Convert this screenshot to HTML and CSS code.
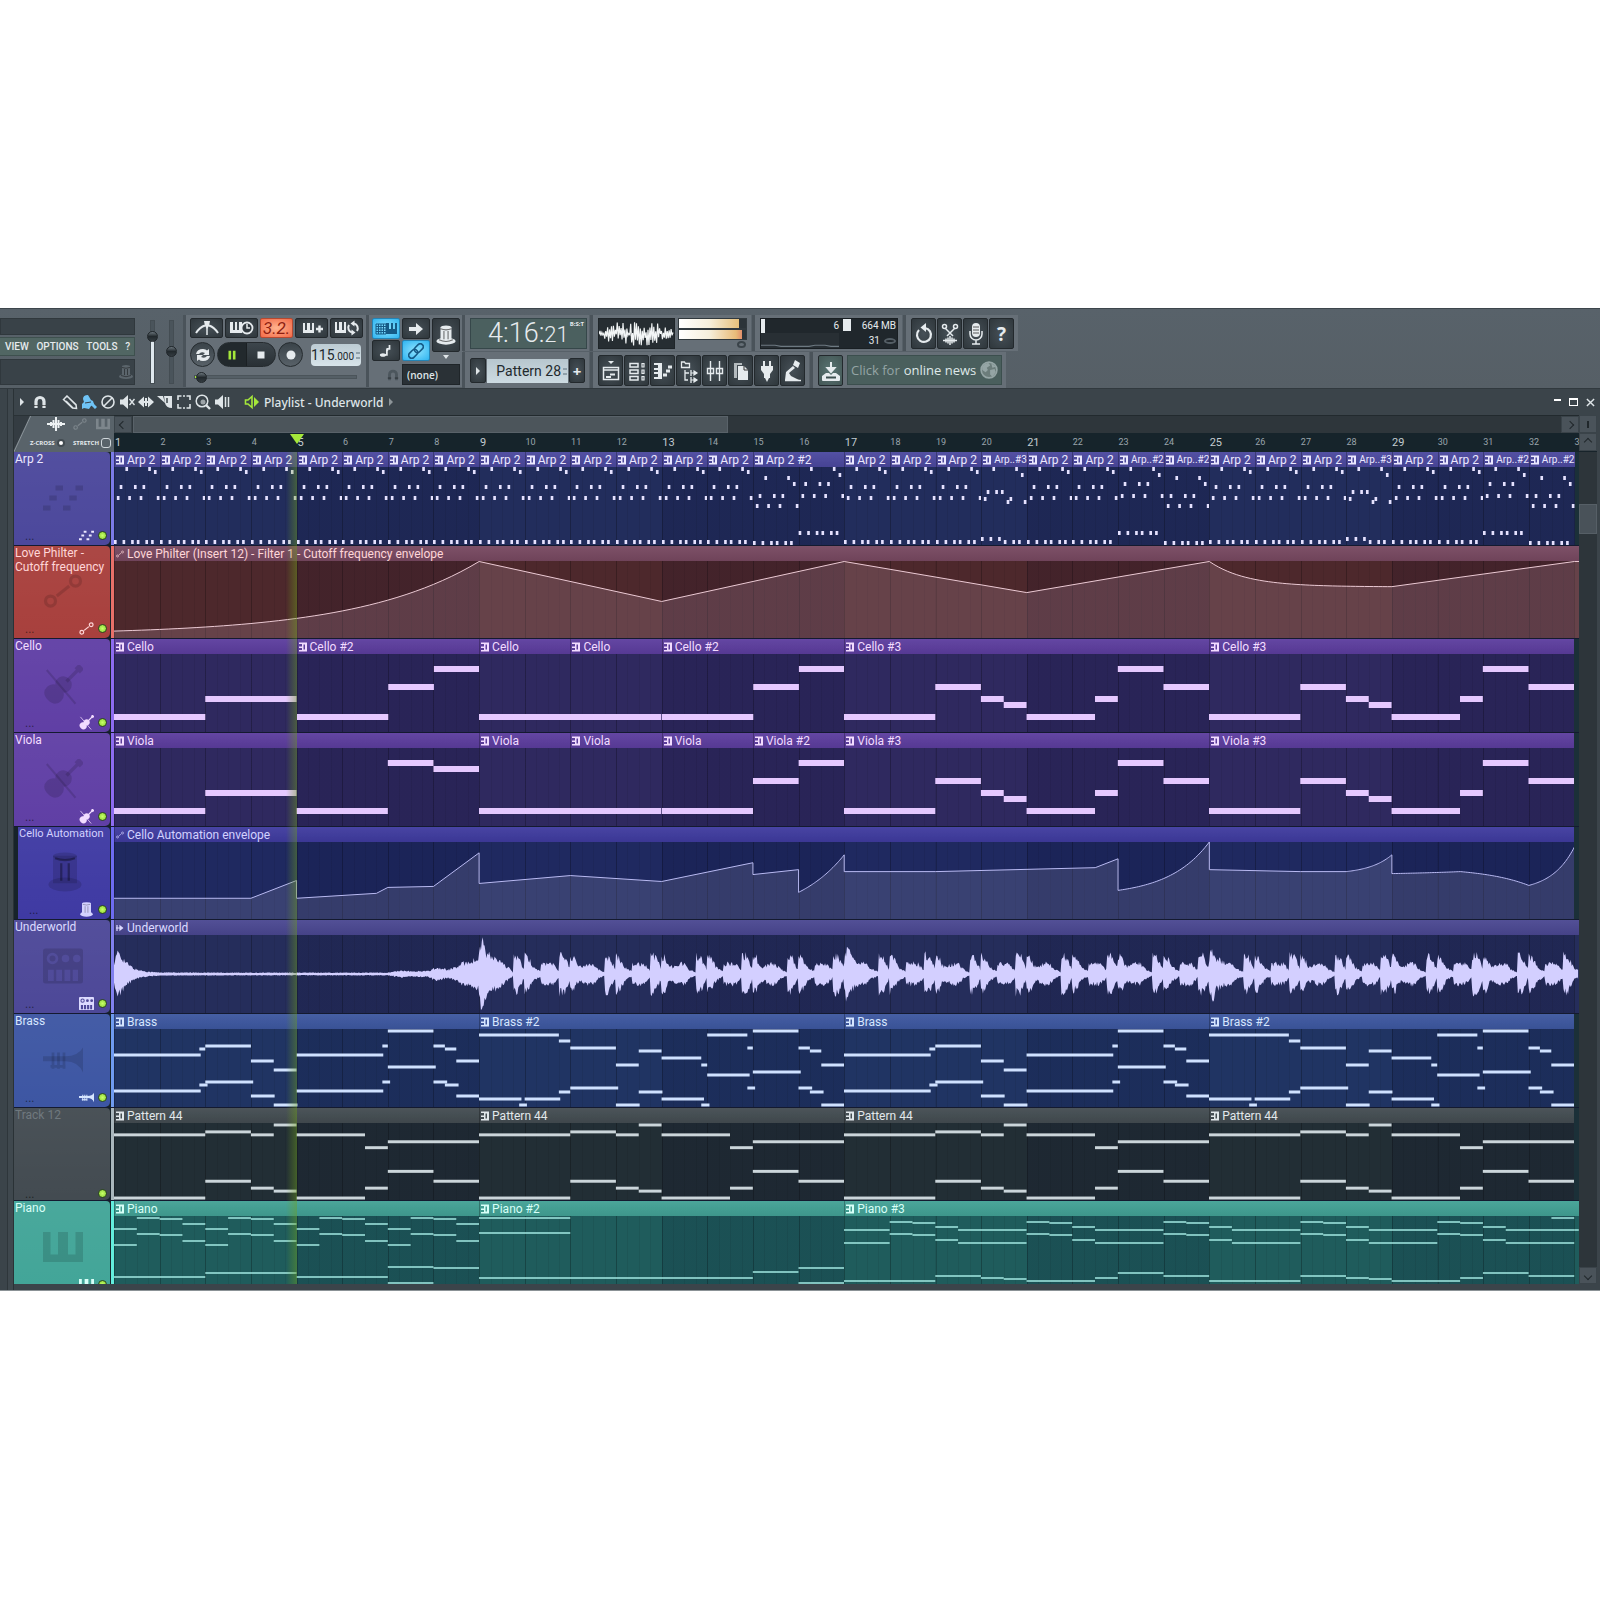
FILE: index.html
```
<!DOCTYPE html>
<html lang="en">
  <head>
    <meta charset="UTF-8" />
    <meta name="viewport" content="width=device-width, initial-scale=1.0" />
    <title>Playlist - Underworld</title>
    <link rel="stylesheet" href="styles.css">
  </head>
  <body>
    <!-- Icon sprite -->
    <svg class="sprite" aria-hidden="true">
      <symbol id="i-metro" viewBox="0 0 26 16"><path d="M2 13Q6 7 11 5.500M24 13Q20 7 15 5.500" fill="none" stroke="currentColor" stroke-width="2"/><path d="M13 15V4" stroke="currentColor" stroke-width="1.500"/><path d="M10 1h6l-1 5-2 3-2-3z" fill="currentColor"/></symbol>
      <symbol id="i-keyclock" viewBox="0 0 26 16"><path d="M1 2h3v8h2V2h2v8h2V2h3v11H1z" fill="currentColor"/><circle cx="18" cy="8" r="5.500" fill="#31393f" stroke="currentColor" stroke-width="1.800"/><path d="M18 4v4h3" fill="none" stroke="currentColor" stroke-width="1.500"/></symbol>
      <symbol id="i-keyplus" viewBox="0 0 26 16"><path d="M4 3h2v7h2V3h3v7h2V3h2v10H4z" fill="currentColor"/><path d="M17 9h7M20.500 5.500v7" stroke="currentColor" stroke-width="2.400"/></symbol>
      <symbol id="i-keyloop" viewBox="0 0 26 16"><path d="M1 2h2v8h2V2h3v8h2V2h2v11H1z" fill="currentColor"/><path d="M18 12.500a5 5 0 0 1-3-7.500M20 3.500a5 5 0 0 1 3 7.500" fill="none" stroke="currentColor" stroke-width="2"/><path d="M20.500 .5v6l-4-3zM17.500 9.500v6l4-3z" fill="currentColor"/></symbol>
      <symbol id="i-loop" viewBox="0 0 16 16"><path d="M1 7q1-5 7-5 3 0 4 1.500L14 2v6H8l2-2q-4-2-6 1zM15 9q-1 5-7 5-3 0-4-1.500L2 14V8h6l-2 2q4 2 6-1z" fill="currentColor"/></symbol>
      <symbol id="i-pause" viewBox="0 0 16 16"><path d="M4 3h3v10H4zM9 3h3v10H9z" fill="currentColor"/></symbol>
      <symbol id="i-stop" viewBox="0 0 16 16"><path d="M4.500 4.500h7v7h-7z" fill="currentColor"/></symbol>
      <symbol id="i-rec" viewBox="0 0 16 16"><circle cx="8" cy="8" r="4.500" fill="currentColor"/></symbol>
      <symbol id="i-typing" viewBox="0 0 24 16"><path d="M2 3h10v10H2zM4.500 3v10M7 3v10M9.500 3v10M2 5.500h10M2 8h10M2 10.500h10" fill="none" stroke="currentColor"/><path d="M12 2h3v6h2V2h2v6h2V2h2v11H12z" fill="currentColor"/></symbol>
      <symbol id="i-arrow" viewBox="0 0 16 16"><path d="M1 6h7V2l7 6-7 6v-4H1z" fill="currentColor"/></symbol>
      <symbol id="i-note" viewBox="0 0 16 16"><ellipse cx="4.500" cy="12.500" rx="3.500" ry="2" fill="currentColor"/><path d="M6 12.500h3V6M9.500 8V5.500h2.500V1" fill="none" stroke="currentColor" stroke-width="2"/></symbol>
      <symbol id="i-link" viewBox="0 0 16 16"><g fill="none" stroke="currentColor" stroke-width="1.600" transform="rotate(-45 8 8)"><rect x="-1" y="5" width="10" height="6" rx="3"/><rect x="7" y="5" width="10" height="6" rx="3"/></g></symbol>
      <symbol id="i-hat" viewBox="0 0 16 16"><path d="M4 2.500v8.500h8V2.500z" fill="currentColor"/><ellipse cx="8" cy="2.500" rx="4" ry="1.500" fill="currentColor"/><ellipse cx="8" cy="12.500" rx="7" ry="2.500" fill="currentColor"/><path d="M6.500 5v6M9.500 5v6M4 3.500q4 1.500 8 0" fill="none" stroke="#0008" stroke-width=".8"/><path d="M3 11.500q5 2.500 10 0" fill="none" stroke="#0008" stroke-width=".8"/></symbol>
      <symbol id="i-mod" viewBox="0 0 16 16"><path d="M3.200 1.500v11h9.600v-11z" fill="currentColor"/><ellipse cx="8" cy="1.700" rx="4.800" ry="1.500" fill="currentColor"/><ellipse cx="8" cy="13" rx="6.600" ry="2.800" fill="currentColor"/><path d="M6.500 4.500v7M9.500 4.500v7M4 2.500q4 1.500 8 0" fill="none" stroke="#0005" stroke-width=".9"/></symbol>
      <symbol id="i-magnet" viewBox="0 0 16 16"><path d="M4 14V7.500a4 4 0 0 1 8 0V14" fill="none" stroke="currentColor" stroke-width="3.200"/><path d="M2 11.500h4M10 11.500h4" stroke="#0008"/></symbol>
      <symbol id="i-playlist" viewBox="0 0 20 24"><path d="M7 2h6l-3 3z" fill="currentColor"/><path d="M2.500 8.500h15v12h-15zM2.500 11h15" fill="none" stroke="currentColor" stroke-width="1.500"/><path d="M5 18h5M9 15.500h5" stroke="currentColor" stroke-width="2"/></symbol>
      <symbol id="i-rack" viewBox="0 0 20 24"><path d="M3 4.500h8v3.500H3zM3 11h8v3.500H3zM3 17.500h8V21H3z" fill="none" stroke="currentColor" stroke-width="1.500"/><path d="M15 4.500h2V8h-2zM15 11h2v3.500h-2zM15 17.500h2V21h-2z" fill="none" stroke="currentColor" stroke-width="1.200"/></symbol>
      <symbol id="i-roll" viewBox="0 0 20 24"><path d="M1 4h8v16H1v-2h4v-3H1v-2h4v-2H1V9h4V6H1z" fill="currentColor"/><path d="M10 16h4M13 12h4M15 8h4" stroke="currentColor" stroke-width="2.800"/></symbol>
      <symbol id="i-browser" viewBox="0 0 20 24"><path d="M2.500 8.500V3h3l1 1.500h4v4zM6 11v10h3M6 14h4M12 11v6M12 18v6" fill="none" stroke="currentColor" stroke-width="1.300"/><path d="M12 14h6M12 21h6M15 12l3 2-3 2zM15 19l3 2-3 2z" stroke="currentColor" fill="currentColor" stroke-width="1.200"/></symbol>
      <symbol id="i-mixer" viewBox="0 0 20 24"><path d="M5.500 2v7M5.500 15v7M14.500 2v7M14.500 15v7M2.500 9.500h6v5h-6zM11.500 9.500h6v5h-6zM5.500 9v6M14.500 9v6" fill="none" stroke="currentColor" stroke-width="1.400"/></symbol>
      <symbol id="i-page" viewBox="0 0 20 24"><path d="M3 4h8v2H6v13H3z" fill="currentColor" opacity=".7"/><path d="M7 7h6l4 4v10H7z" fill="currentColor"/><path d="M13 7v4h4" fill="none" stroke="#333"/></symbol>
      <symbol id="i-plug" viewBox="0 0 20 24"><path d="M6 2h2v5h4V2h2v5h2v4l-3 4v4h-1l-2 4-2-4H7v-4l-3-4V7h2z" fill="currentColor"/></symbol>
      <symbol id="i-stomp" viewBox="0 0 20 24"><path d="M12 1l5 3-2 5-5-3zM2 21l1-8 7-6 2 2-6 5 2 3 8 4z" fill="currentColor"/><path d="M2 21.500h16" stroke="currentColor" stroke-width="1.500"/></symbol>
      <symbol id="i-undo" viewBox="0 0 20 24"><path d="M5 8a7 7 0 1 0 6-2" fill="none" stroke="currentColor" stroke-width="2.200"/><path d="M12 1v9L6.500 5.500z" fill="currentColor"/></symbol>
      <symbol id="i-cut" viewBox="0 0 20 24"><path d="M5 6l8 8M15 6l-8 8M3 18.500h14" stroke="currentColor" stroke-width="1.500"/><circle cx="4.500" cy="4.500" r="2" fill="none" stroke="currentColor" stroke-width="1.500"/><circle cx="15.500" cy="4.500" r="2" fill="none" stroke="currentColor" stroke-width="1.500"/><path d="M6 16.500v4M8 15.500v6M10 14v9M12 15.500v6M14 16.500v4" stroke="currentColor" stroke-width="1.500"/></symbol>
      <symbol id="i-mic" viewBox="0 0 20 24"><rect x="6" y="1" width="8" height="14" rx="4" fill="currentColor"/><path d="M4 9v3a6 6 0 0 0 12 0V9M10 18v4M6 22h8" fill="none" stroke="currentColor" stroke-width="1.500"/><path d="M7 5h6M7 8h6M7 11h6" stroke="#333" stroke-width=".8"/></symbol>
      <symbol id="i-save" viewBox="0 0 20 24"><path d="M10 3v9M6.500 9h7L10 13z" stroke="currentColor" stroke-width="2" fill="currentColor"/><path d="M5 14h3l2 2 2-2h3l4 3v4q0 1-1 1H2q-1 0-1-1v-4z" fill="currentColor"/><path d="M5 18.500h10" stroke="#3c4f4f" stroke-width="2"/></symbol>
      <symbol id="i-globe" viewBox="0 0 16 16"><circle cx="8" cy="8" r="7" fill="#ffffff30" stroke="currentColor" stroke-width="1.500"/><path d="M2 5q3-4 6-3l1 2-3 2 1 2-2 2-3-2zM9 8l4-1 1 3-3 4-2-2zM10 2l4 3-3 1z" fill="currentColor"/></symbol>
      <symbol id="i-pencil" viewBox="0 0 16 16"><path d="M1.500 5.500L5 2l9 8.500.5 4-4-.5zM4 7l7 7M7 4l7 7M2 5l3-3" fill="none" stroke="currentColor" stroke-width="1.500"/></symbol>
      <symbol id="i-brush" viewBox="0 0 16 16"><path d="M2 5q0-4 5-4l3 5 2 1 1 3-3 2-2 3-5-1-2 1V10l2-2z" fill="currentColor"/><path d="M11 10l4 4" stroke="currentColor" stroke-width="3"/><path d="M4 9l6-1" stroke="#35404a"/></symbol>
      <symbol id="i-no" viewBox="0 0 16 16"><circle cx="8" cy="8" r="6" fill="none" stroke="currentColor" stroke-width="1.600"/><path d="M4 12l8-8" stroke="currentColor" stroke-width="1.600"/></symbol>
      <symbol id="i-mute" viewBox="0 0 16 16"><path d="M1 5.500h3L9 1v14l-5-4.500H1z" fill="currentColor"/><path d="M10.500 5l5 6M15.500 5l-5 6" stroke="currentColor" stroke-width="1.400"/></symbol>
      <symbol id="i-slip" viewBox="0 0 16 16"><path d="M0 8l6-5.500V7h1V4h2v3h1V2.500L16 8l-6 5.500V9H9v3H7V9H6v4.500z" fill="currentColor"/></symbol>
      <symbol id="i-slice" viewBox="0 0 16 16"><path d="M0 2h6l2 7zM7 2h8v12q-6 0-7-5z" fill="currentColor"/><path d="M10 4v5" stroke="#3b444a" stroke-width="1.500"/></symbol>
      <symbol id="i-select" viewBox="0 0 16 16"><path d="M2 6V2h3.500M10.500 2H14v4M14 10v4h-3.500M5.500 14H2v-4M7 2h2M7 14h2" fill="none" stroke="currentColor" stroke-width="1.600"/></symbol>
      <symbol id="i-zoom" viewBox="0 0 16 16"><circle cx="7" cy="7" r="5.800" fill="none" stroke="currentColor" stroke-width="1.500"/><circle cx="8" cy="8" r="2.500" fill="currentColor" opacity=".6"/><path d="M11 11l4 4" stroke="currentColor" stroke-width="2.400"/></symbol>
      <symbol id="i-speaker" viewBox="0 0 16 16"><path d="M1 5.500h3L9 1v14l-5-4.500H1z" fill="currentColor"/><path d="M11.500 3v10M14.500 3v10" stroke="currentColor" stroke-width="1.500"/></symbol>
      <symbol id="i-sound" viewBox="0 0 16 16"><path d="M1.500 6H4l4-3.500v11L4 10H1.500z" fill="none" stroke="currentColor" stroke-width="1.600"/><path d="M10 3l5 5-5 5z" fill="currentColor"/></symbol>
      <symbol id="i-wave" viewBox="0 0 18 14"><path d="M0 7h18M4 5v4M6.500 3v8M9 0v14M11.500 3v8M14 5v4" stroke="currentColor" stroke-width="2"/></symbol>
      <symbol id="i-auto" viewBox="0 0 16 16"><circle cx="3" cy="12" r="2" fill="none" stroke="currentColor" stroke-width="1.300"/><circle cx="13" cy="4" r="2" fill="none" stroke="currentColor" stroke-width="1.300"/><path d="M5.500 10l5-4" stroke="currentColor" stroke-width="1.300"/></symbol>
      <symbol id="i-keys" viewBox="0 0 16 16"><path d="M0 2h3v9h3V2h4v9h3V2h3v12H0z" fill="currentColor"/></symbol>
      <symbol id="i-steps" viewBox="0 0 16 16"><path d="M5 3h3v2H5zM13 3h3v2h-3zM2.500 7h3v2h-3zM10.500 7h3v2h-3zM0 11h3v2H0zM8 11h3v2H8z" fill="currentColor"/></symbol>
      <symbol id="i-violin" viewBox="0 0 16 16"><g transform="rotate(45 8 8)" fill="currentColor"><path d="M8 16.500q-4 0-4-3.500 0-2 1.700-3-1.300-1-1-3Q5.500 4.500 8 4.500t3.300 2.500q.3 2-1 3 1.700 1 1.700 3 0 3.500-4 3.500z"/><path d="M7.300-2h1.400v8H7.300zM6.500-2.500h3V0h-3z"/></g><path d="M1.500 2L13 15.500" stroke="currentColor" stroke-width=".8"/></symbol>
      <symbol id="i-drum" viewBox="0 0 16 16"><path fill-rule="evenodd" d="M0 2q0-1 1-1h14q1 0 1 1v12q0 1-1 1H1q-1 0-1-1zM1.500 5a2.300 2.300 0 1 0 4.600 0 2.300 2.300 0 1 0-4.600 0zM7.500 5a1.500 1.500 0 1 0 3 0 1.500 1.500 0 1 0-3 0zM12 5a1.500 1.500 0 1 0 3 0 1.500 1.500 0 1 0-3 0zM2 9.500h2.300V14H2zM5.300 9.500h2.300V14H5.300zM8.600 9.500h2.300V14H8.600zM11.900 9.500H14V14h-2.100z" fill="currentColor"/><circle cx="3.800" cy="5" r="1.200" fill="currentColor"/></symbol>
      <symbol id="i-horn" viewBox="0 0 16 16"><path d="M0 6.500h9q5 0 7-3.500v10q-2-4.500-7-4.500H0z" fill="currentColor"/><path d="M3 10.500h6M4 5v6.500M6.200 5v6.500M8.400 5v6.500" stroke="currentColor" stroke-width="1.100"/></symbol>
      <symbol id="i-clip" viewBox="0 0 8 10"><path fill-rule="evenodd" d="M0 .5h8v9H0V8h3V6H0V4.500h3V2H0zM4.500 2.500v5H6v-5z" fill="currentColor"/></symbol>
      <symbol id="i-audio" viewBox="0 0 8 10"><path d="M0 5h7M1 2v6M4 3l2.500 2L4 7z" stroke="currentColor" fill="currentColor" stroke-width="1.200"/></symbol>
    </svg>

    <main class="daw">
      <header class="toolbar">
        <div class="menus">
          <div class="slot"></div>
          <nav class="menu">
            <button>VIEW</button><button>OPTIONS</button><button>TOOLS</button><button>?</button>
          </nav>
          <div class="slot slot-hint"><svg class="ic16"><use href="#i-hat"/></svg></div>
        </div>

        <div class="faders">
          <input type="range" class="fader main-vol" aria-label="Main volume" value="88" />
          <input type="range" class="fader main-pitch" aria-label="Main pitch" value="58" />
        </div>

        <div class="panel transport">
          <div class="row">
            <button class="key" aria-label="Metronome"><svg class="ic26"><use href="#i-metro"/></svg></button>
            <button class="key" aria-label="Wait for input"><svg class="ic26"><use href="#i-keyclock"/></svg></button>
            <button class="key count">3.2.</button>
            <button class="key" aria-label="Blend notes"><svg class="ic26"><use href="#i-keyplus"/></svg></button>
            <button class="key" aria-label="Loop record"><svg class="ic26"><use href="#i-keyloop"/></svg></button>
          </div>
          <div class="row play-row">
            <button class="round" aria-label="Song mode"><svg class="ic16"><use href="#i-loop"/></svg></button>
            <div class="play-pair">
              <button class="pause" aria-label="Pause"><svg class="ic14"><use href="#i-pause"/></svg></button>
              <button aria-label="Stop"><svg class="ic16"><use href="#i-stop"/></svg></button>
            </div>
            <button class="round" aria-label="Record"><svg class="ic16"><use href="#i-rec"/></svg></button>
            <div class="tempo">115<small>.000</small><i class="spin"></i></div>
          </div>
          <input type="range" class="song-pos" aria-label="Song position" value="3" />
        </div>

        <div class="panel modes">
          <div class="modes-grid">
            <button class="key lit" aria-label="Typing keyboard"><svg class="ic24"><use href="#i-typing"/></svg></button>
            <button class="key" aria-label="Auto scroll"><svg class="ic16"><use href="#i-arrow"/></svg></button>
            <button class="key tall" aria-label="Plugin"><svg class="ic22"><use href="#i-hat"/></svg></button>
            <button class="key" aria-label="Step edit"><svg class="ic14"><use href="#i-note"/></svg></button>
            <button class="key lit" aria-label="Link"><svg class="ic16"><use href="#i-link"/></svg></button>
            <i class="caret-down"></i>
          </div>
          <div class="snap">
            <svg class="ic14"><use href="#i-magnet"/></svg>
            <select aria-label="Snap"><option>(none)</option></select>
          </div>
        </div>

        <div class="decks">
          <div class="deck">
            <div class="panel first">
              <div class="lcd">4:16:<small>21</small><span class="unit">B:S:T</span></div>
            </div>
            <div class="panel second">
              <svg class="scope" id="scope" viewBox="0 0 78 32" preserveAspectRatio="none"></svg>
              <div class="meters"><i class="meter"></i><i class="meter hot"></i><i class="dial"></i></div>
            </div>
            <div class="panel">
              <div class="stats">
                <div class="stats-cpu"><i class="level"></i><span>6</span></div>
                <div class="stats-mem"><i class="level wide"></i><span>664 MB</span></div>
                <svg class="stats-line" viewBox="0 0 78 14" preserveAspectRatio="none"><path d="M0 11.500h14l6 1h28l6-1h10l6 1h8" fill="none" stroke="#6d7981"/></svg>
                <div class="stats-poly"><span>31</span><i class="lips"></i></div>
              </div>
            </div>
            <div class="panel tiles">
              <button class="tile" aria-label="Undo"><svg class="ic-tile"><use href="#i-undo"/></svg></button>
              <button class="tile" aria-label="Edit audio"><svg class="ic-tile"><use href="#i-cut"/></svg></button>
              <button class="tile" aria-label="Record audio"><svg class="ic-tile"><use href="#i-mic"/></svg></button>
              <button class="tile help">?</button>
            </div>
          </div>
          <div class="deck">
            <div class="panel first pattern">
              <button class="tile slim" aria-label="Pattern menu"><i class="caret-right"></i></button>
              <div class="pattern-box"><select aria-label="Pattern"><option>Pattern 28</option></select><i class="spin"></i></div>
              <button class="tile slim">+</button>
            </div>
            <div class="panel tiles">
              <button class="tile" aria-label="Playlist"><svg class="ic-tile"><use href="#i-playlist"/></svg></button>
              <button class="tile" aria-label="Channel rack"><svg class="ic-tile"><use href="#i-rack"/></svg></button>
              <button class="tile" aria-label="Piano roll"><svg class="ic-tile"><use href="#i-roll"/></svg></button>
              <button class="tile" aria-label="Browser"><svg class="ic-tile"><use href="#i-browser"/></svg></button>
              <button class="tile" aria-label="Mixer"><svg class="ic-tile"><use href="#i-mixer"/></svg></button>
              <button class="tile" aria-label="Project"><svg class="ic-tile"><use href="#i-page"/></svg></button>
              <button class="tile" aria-label="Plugins"><svg class="ic-tile"><use href="#i-plug"/></svg></button>
              <button class="tile" aria-label="Tempo tapper"><svg class="ic-tile"><use href="#i-stomp"/></svg></button>
            </div>
            <div class="panel tiles">
              <button class="tile teal" aria-label="Download"><svg class="ic-tile"><use href="#i-save"/></svg></button>
              <a class="news" href="#">Click for <b>online news</b><svg class="ic18"><use href="#i-globe"/></svg></a>
            </div>
          </div>
        </div>
      </header>

      <section class="playlist">
        <div class="titlebar">
          <i class="caret-right"></i>
          <svg class="ic16 magnet"><use href="#i-magnet"/></svg>
          <div class="tools">
            <svg><use href="#i-pencil"/></svg>
            <svg class="active"><use href="#i-brush"/></svg>
            <svg><use href="#i-no"/></svg>
            <svg><use href="#i-mute"/></svg>
            <svg><use href="#i-slip"/></svg>
            <svg><use href="#i-slice"/></svg>
            <svg><use href="#i-select"/></svg>
            <svg><use href="#i-zoom"/></svg>
            <svg><use href="#i-speaker"/></svg>
          </div>
          <svg class="ic16 sound"><use href="#i-sound"/></svg>
          <h1>Playlist - Underworld</h1>
          <i class="caret-right dim"></i>
          <div class="window-buttons">
            <button class="win-min" aria-label="Minimize"></button>
            <button class="win-max" aria-label="Maximize"></button>
            <button class="win-close" aria-label="Close"><svg viewBox="0 0 10 10"><path d="M1 1l8 8M9 1L1 9" stroke="currentColor" stroke-width="1.600"/></svg></button>
          </div>
        </div>

        <div class="board">
          <div class="corner">
            <div class="corner-icons">
              <svg class="on"><use href="#i-wave"/></svg>
              <svg><use href="#i-auto"/></svg>
              <svg><use href="#i-keys"/></svg>
            </div>
            <div class="corner-opts">
              <label>Z-CROSS <input type="radio" checked /></label>
              <label>STRETCH <input type="checkbox" /></label>
            </div>
          </div>
          <div class="timeline">
            <div class="hscroll">
              <button aria-label="Scroll left"><i class="chev left"></i></button>
              <div class="hthumb"></div>
              <button class="end" aria-label="Scroll right"><i class="chev right"></i></button>
            </div>
            <div class="ruler" id="ruler"><i class="marker"></i></div>
          </div>
          <div class="vtop">
            <button aria-label="Zoom"><i class="tick"></i></button>
            <button aria-label="Scroll up"><i class="chev up"></i></button>
          </div>

          <div class="tracks" id="tracks">
            <div class="cursor-area"><i class="playhead"></i></div>
          </div>
          <div class="vscroll">
            <div class="vthumb"></div>
            <button aria-label="Scroll down"><i class="chev down"></i></button>
          </div>
        </div>
      </section>
    </main>

    <script src="script.js"></script>
  </body>
</html>
```

FILE: styles.css
```
* {
  box-sizing: border-box;
}
body {
  margin: 0;
  padding-top: 308px;
  background-color: #fff;
  font-family: Roboto, sans-serif;
  color: #e6ebee;
}
button,
select,
input {
  margin: 0;
  padding: 0;
  border: 0;
  background: none;
  color: inherit;
  font: inherit;
}
button {
  display: flex;
  align-items: center;
  justify-content: center;
}
select {
  appearance: none;
}
.sprite {
  position: absolute;
  width: 0;
  height: 0;
}
.daw {
  overflow: hidden;
  background-color: #58626a;
  border-top: 1px solid #3d464c;
  border-bottom: 1px solid #8b9296;
}

/* Toolbar */
.toolbar {
  display: flex;
  height: 79px;
  padding-top: 6px;
  background: linear-gradient(#58626a, #565f66);
}
.ic14 { width: 14px; height: 14px; }
.ic16 { width: 16px; height: 16px; }
.ic18 { width: 18px; height: 18px; }
.ic22 { width: 22px; height: 22px; }
.ic24 { width: 24px; height: 16px; }
.ic26 { width: 26px; height: 16px; }
.ic-tile { width: 20px; height: 24px; }

.menus {
  width: 135px;
  padding-top: 3px;
}
.slot {
  height: 17px;
  background-color: #394248;
  border: 1px solid #30383d;
}
.menu {
  display: flex;
  justify-content: space-between;
  height: 19px;
  margin: 2px 0 3px;
  padding: 0 4px 0 5px;
  background-color: #516663;
  border: 1px solid #3e504e;
  border-left: 0;
  font-size: 10px;
  font-weight: 500;
}
.slot-hint {
  display: flex;
  align-items: center;
  justify-content: flex-end;
  height: 26px;
  color: #5b656c;
}
.faders {
  display: flex;
  gap: 6px;
  padding: 5px 0 0 11px;
  width: 48px;
}
.fader {
  appearance: none;
  writing-mode: vertical-lr;
  direction: rtl;
  width: 13px;
  height: 64px;
}
.fader::-webkit-slider-runnable-track {
  width: 5px;
  margin: 0 4px;
  background: #4a545b;
  border: 1px solid #444d53;
}
.main-vol::-webkit-slider-runnable-track {
  background: linear-gradient(#4a545b 20%, #dfe8ee 20%);
}
.fader::-webkit-slider-thumb,
.song-pos::-webkit-slider-thumb {
  appearance: none;
  width: 11px;
  height: 11px;
  margin: -4px;
  border-radius: 50%;
  background: linear-gradient(#6a747b, #22292d 50%, #343c41);
  border: 1px solid #20262a;
}
.panel {
  background-color: #666f77;
  border-left: 3px solid #4a535a;
}
.transport {
  width: 183px;
  margin-bottom: 1px;
  padding: 3px 0 0 4px;
}
.row {
  display: flex;
  gap: 2px;
}
.key,
.tile {
  background: radial-gradient(#465057, #2f373c);
  border: 1px solid #23292d;
  border-radius: 2px;
}
.transport .key {
  width: 33px;
  height: 20px;
}
.transport .count {
  background: radial-gradient(#ffb48f, #f46a48);
  border-color: #b54931;
  color: #8e1d10;
  font-size: 17px;
  font-style: italic;
}
.play-row {
  align-items: center;
  margin: 4px 0;
}
.round,
.play-pair {
  height: 25px;
  border: 1px solid #252b2f;
  background: linear-gradient(#3a4349, #586168);
}
.round {
  width: 25px;
  border-radius: 50%;
}
.play-pair {
  display: flex;
  width: 59px;
  border-radius: 13px;
  background: linear-gradient(#3d464c, #293035);
  overflow: hidden;
}
.play-pair button {
  flex: 1;
}
.play-pair .pause {
  background-color: #22292d;
  border-right: 1px solid #1b2023;
  color: #a5e83a;
}
.tempo {
  display: flex;
  align-items: baseline;
  justify-content: center;
  width: 50px;
  height: 22px;
  margin-left: 6px;
  border-radius: 4px;
  background: linear-gradient(#bccbd3, #d8e4ea);
  color: #22292d;
  font-size: 14px;
  line-height: 22px;
}
.tempo small {
  font-size: 10px;
}
.spin {
  align-self: center;
  width: 6px;
  height: 10px;
  margin-left: 1px;
  background:
    linear-gradient(#8fa0aa, #8fa0aa) center 2px / 4px 2px no-repeat,
    linear-gradient(#8fa0aa, #8fa0aa) center 7px / 4px 2px no-repeat;
}
.song-pos {
  display: block;
  appearance: none;
  width: 163px;
  height: 12px;
  margin-left: 4px;
}
.song-pos::-webkit-slider-runnable-track {
  height: 4px;
  background: linear-gradient(to right, #a5e83a 4%, #555f66 4%);
  border: 1px solid #4b545a;
}
.modes {
  width: 97px;
  margin-bottom: 1px;
  padding: 3px 0 0 3px;
}
.modes-grid {
  display: grid;
  grid-template-columns: repeat(3, 28px);
  grid-template-rows: 21px 12px 8px;
  gap: 1px 2px;
}
.modes-grid .key:nth-child(4),
.modes-grid .key:nth-child(5) {
  grid-row: 2 / 4;
}
.modes-grid .key:nth-child(4) {
  grid-column: 1;
}
.tall {
  grid-row: 1 / 3;
  grid-column: 3;
}
.lit {
  background: radial-gradient(#8fe4ff, #2fb4f0);
  border-color: #2484b5;
  color: #155a86;
}
.caret-down {
  grid-row: 3;
  grid-column: 3;
  justify-self: center;
  align-self: center;
  border: 3px solid transparent;
  border-top: 4px solid #dfe5e8;
  border-bottom: 0;
}
.caret-right {
  border: 4px solid transparent;
  border-left: 4px solid #dfe5e8;
  border-right: 0;
}
.snap {
  display: flex;
  justify-content: flex-end;
  align-items: center;
  gap: 2px;
  margin: 3px 3px 0 0;
  color: #4c565d;
}
.snap select {
  width: 58px;
  height: 21px;
  padding-left: 4px;
  background-color: #2a3136;
  border: 1px solid #1f2529;
  color: #dfe5e8;
  font: 600 10px "Open Sans", sans-serif;
}

/* Two decks of panels on the right */
.decks {
  display: flex;
  flex-direction: column;
  gap: 1px;
  margin-left: -1px;
}
.deck {
  display: flex;
  gap: 1px;
  height: 36px;
}
.deck .panel {
  padding: 3px 4px 2px 5px;
}
.deck .first {
  width: 127px;
}
.lcd {
  display: flex;
  align-items: baseline;
  justify-content: flex-end;
  width: 117px;
  height: 31px;
  padding-right: 2px;
  background-color: #4b605f;
  border: 1px solid #36474a;
  font-size: 27px;
  font-weight: 300;
  line-height: 29px;
}
.lcd small {
  font-size: 22px;
}
.unit {
  align-self: flex-start;
  margin: 1px 0 0 1px;
  font: bold 6px/8px "Open Sans", sans-serif;
}
.second {
  display: flex;
  gap: 3px;
  width: 161px;
}
.scope {
  width: 78px;
  height: 31px;
  background-color: #262d32;
  border: 1px solid #1f2529;
}
.meters {
  display: flex;
  flex-direction: column;
  width: 70px;
}
.meter {
  height: 11px;
  border: 1px solid #31393e;
  background: linear-gradient(to right, #fff, #f6efdc 45%, #e7c07a 90%, #2c3439 90%);
}
.hot {
  background: linear-gradient(to right, #fff, #f6efdc 45%, #e9bb78 85%, #e28f6b 94%, #2c3439 94%);
}
.dial {
  align-self: flex-end;
  width: 9px;
  height: 7px;
  margin: 1px 1px 0;
  border: 2px solid #3a4349;
  border-radius: 50%;
}
.stats {
  display: grid;
  grid-template-columns: 78px 57px;
  grid-template-rows: 14px 15px;
  width: 138px;
  height: 31px;
  background-color: #20272c;
  border: 1px solid #191f23;
  font-size: 10px;
  line-height: 14px;
}
.stats-cpu,
.stats-mem {
  display: flex;
  justify-content: space-between;
}
.stats-cpu .level {
  width: 4px;
  background-color: #e6ebee;
}
.stats-mem {
  padding-left: 4px;
}
.wide {
  width: 8px;
  height: 12px;
  background-color: #e6ebee;
}
.stats-line {
  width: 78px;
  height: 15px;
  background-color: #282f34;
}
.stats-poly {
  display: flex;
  justify-content: flex-end;
  align-items: center;
  gap: 4px;
}
.lips {
  width: 12px;
  height: 6px;
  border: 2px solid #555f66;
  border-radius: 50%;
}
.tiles,
.pattern {
  display: flex;
  gap: 1px;
}
.tile {
  width: 25px;
  height: 31px;
}
.help {
  font: bold 19px "Open Sans", sans-serif;
}
.slim {
  width: 16px;
  height: 25px;
  align-self: center;
  font: bold 15px "Open Sans", sans-serif;
}
.pattern-box {
  display: flex;
  flex: 1;
  align-self: center;
  height: 24px;
  background: linear-gradient(#b7c6ce, #cddbe2);
  color: #22292d;
  font-size: 14px;
}
.pattern-box select {
  flex: 1;
  text-align: right;
  text-align-last: right;
}
.teal {
  background: radial-gradient(#5a7573, #435655);
}
.news {
  display: flex;
  align-items: center;
  gap: 4px;
  height: 30px;
  margin-left: 3px;
  padding: 0 3px;
  background-color: #4a5f5d;
  border: 1px solid #3c4f4e;
  color: #95a5a5;
  font: 13px "Open Sans", sans-serif;
  text-decoration: none;
}
.news b {
  font-weight: 400;
  color: #dfe8e8;
}

/* Playlist window */
.playlist {
  padding: 0 3px 6px 14px;
  background: linear-gradient(to right, #3b444a 7px, #2e363b 7px 8px, #3f484e 8px 13px, #2a3236 13px 14px, #3b444a 14px);
  border-top: 1px solid #31393e;
}
.titlebar {
  display: flex;
  align-items: center;
  height: 26px;
  padding: 0 2px 0 6px;
  color: #dfe5e8;
}
.magnet {
  margin: 0 14px 0 8px;
}
.tools {
  display: flex;
  gap: 3px;
}
.tools svg {
  width: 16px;
  height: 16px;
}
.tools .active {
  color: #6fc3f5;
}
.sound {
  margin: 0 4px 0 14px;
  color: #a5e83a;
}
.titlebar h1 {
  margin: 0 6px 0 0;
  font: 500 12px "Noto Sans", sans-serif;
}
.dim {
  opacity: 0.5;
}
.window-buttons {
  display: flex;
  align-items: center;
  gap: 8px;
  margin-left: auto;
}
.win-min {
  width: 7px;
  height: 2px;
  margin-bottom: 4px;
  background-color: #fff;
}
.win-max {
  width: 9px;
  height: 8px;
  border: 1px solid #fff;
  border-top-width: 2px;
}
.win-close svg {
  width: 9px;
  height: 9px;
}
.board {
  display: grid;
  grid-template-columns: 100px 1fr 18px;
  background-color: #17232a;
}
.corner {
  height: 37px;
  padding: 1px 3px 0 16px;
  background: linear-gradient(115deg, #343c42 14px, #8b949a 15px, #59636a 16px);
  border-top: 1px solid #2a3236;
}
.corner-icons {
  display: flex;
  justify-content: flex-end;
  gap: 7px;
  color: #7d868c;
}
.corner-icons svg {
  width: 16px;
  height: 14px;
}
.corner-icons .on {
  width: 18px;
  color: #eef2f4;
}
.corner-opts {
  display: flex;
  justify-content: space-between;
  align-items: center;
  height: 10px;
  margin-top: 7px;
}
.corner-opts label {
  display: flex;
  align-items: center;
  gap: 2px;
  font: bold 6px "Open Sans", sans-serif;
}
.corner-opts input {
  appearance: none;
  width: 10px;
  height: 10px;
  border: 1px solid #cfd6da;
  border-radius: 3px;
}
.corner-opts input[type="radio"] {
  width: 8px;
  height: 8px;
  border: 2px solid #424b51;
  border-radius: 50%;
  background-color: #fff;
}
.timeline {
  min-width: 0;
}
.hscroll {
  display: flex;
  height: 18px;
  background-color: #2e363b;
  border-top: 1px solid #222a2e;
}
.hscroll button,
.vtop button,
.vscroll button {
  width: 18px;
  height: 17px;
  background-color: #4a535a;
  border: 1px solid #3a4349;
}
.hthumb {
  width: 40.6%;
  margin-left: 1px;
  background-color: #4c555b;
  border: 1px solid #596269;
}
.hscroll .end {
  margin-left: auto;
}
.chev {
  width: 6px;
  height: 6px;
  border: solid #20272b;
  border-width: 1px 1px 0 0;
}
.left { transform: rotate(-135deg); }
.right { transform: rotate(45deg); }
.up { transform: rotate(-45deg); }
.down { transform: rotate(135deg); }
.tick {
  width: 2px;
  height: 7px;
  background-color: #20272b;
}
.ruler {
  position: relative;
  display: flex;
  height: 19px;
  overflow: hidden;
  background-color: #16242b;
  color: #9aa5ab;
  font-size: 9px;
  line-height: 19px;
}
.ruler span {
  width: 0;
  padding-left: 1px;
}
.ruler .strong {
  color: #c3ccd1;
  font-size: 11px;
}
.marker {
  position: absolute;
  top: 1px;
  left: 12.46%;
  margin-left: -7px;
  border: 7px solid transparent;
  border-top: 10px solid #a5e83a;
  border-bottom: 0;
}
.vtop button {
  height: 18px;
}
.tracks {
  position: relative;
  grid-column: 1 / 3;
  height: 832px;
  overflow: hidden;
}
.vscroll {
  display: flex;
  flex-direction: column;
  background-color: #2d353a;
}
.vthumb {
  height: 30px;
  margin-top: 52px;
  background-color: #495259;
  border: 1px solid #565f66;
}
.vscroll button {
  margin-top: auto;
}

/* Tracks */
.track {
  display: flex;
  height: 94px;
  border-bottom: 1px solid #141a30;
  background-color: #17232a;
}
.track:nth-of-type(3n + 2) {
  height: 93px;
}
.track-head {
  display: grid;
  width: 96px;
  padding: 0 0 2px 1px;
  border-radius: 0 4px 5px 0;
  background: linear-gradient(#ffffff0a, #0000), var(--head);
  color: var(--text);
}
.nested .track-head {
  width: 92px;
  margin-left: 4px;
}
.track-head > * {
  grid-area: 1 / 1;
}
.track-name {
  font-size: 12px;
  line-height: 14px;
  white-space: pre;
}
.nested .track-name {
  font-size: 11px;
}
.track-icon {
  width: 40px;
  height: 40px;
  place-self: center;
  color: #0002;
}
.track-foot {
  display: flex;
  align-self: end;
  align-items: center;
  gap: 4px;
  padding-right: 3px;
}
.track-foot svg {
  width: 15px;
  height: 15px;
}
.dots {
  margin: 0 auto 0 10px;
  color: #0008;
  font-size: 12px;
  line-height: 8px;
}
.led {
  width: 9px;
  height: 9px;
  border: 1px solid #2c4a1c;
  border-radius: 50%;
  background: radial-gradient(#c8ff6a, #86d030);
}
.strip {
  width: 3px;
  margin-left: 1px;
  background-color: var(--strip);
}
.lane {
  display: flex;
  flex: 1;
  min-width: 0;
  background:
    repeating-linear-gradient(to right, #0000 0 12.4611%, #00002020 12.4611% 24.9221%),
    repeating-linear-gradient(to right, #0003 0 1px, #0000 1px 3.1153%),
    repeating-linear-gradient(to right, #0001 0 1px, #0000 1px 0.7788%),
    var(--body);
}
.lane-end {
  background-color: #1b3038;
}
.clip {
  display: flex;
  flex-direction: column;
  flex-basis: 0;
  min-width: 0;
  color: var(--text);
}
.clip-name {
  display: flex;
  align-items: center;
  gap: 3px;
  height: 15px;
  padding-left: 2px;
  overflow: hidden;
  background: linear-gradient(#ffffff0c, #0001), var(--clip);
  box-shadow: inset 1px 0 #0004;
  font-size: 12px;
  line-height: 14px;
  white-space: nowrap;
}
.short {
  font-size: 10px;
}
.clip-name svg {
  flex: none;
  width: 8px;
  height: 10px;
}
.clip-body {
  flex: 1;
  width: 100%;
  min-height: 0;
  fill: var(--note);
}
.env-fill {
  fill: var(--fill);
}
.env-line {
  fill: none;
  stroke: var(--note);
  vector-effect: non-scaling-stroke;
}
.cursor-area {
  position: absolute;
  inset: 0 0 0 100px;
  pointer-events: none;
}
.playhead {
  position: absolute;
  top: 0;
  bottom: 0;
  left: 12.46%;
  width: 11px;
  margin-left: -11px;
  background: linear-gradient(to right, #5a8a0000, #6fa01a70);
}

.arp { --head: #4c489c; --clip: #4b489e; --body: #222d5c; --text: #ebe8ff; --note: #e6e2ff; --strip: #7b7be8; }
.love { --head: #a8403d; --clip: #774860; --body: #4d282c; --fill: #ffdaf925; --text: #ffd6d8; --note: #eccad4; --strip: #e87069; }
.cello { --head: #603fa5; --clip: #5c3d9e; --body: #2f295f; --text: #f2dcff; --note: #e5c8ff; --strip: #8d6cf0; }
.cello-auto { --head: #3f3aa3; --clip: #3f3b9f; --body: #1f2960; --fill: #fff8ff1e; --text: #d3d2ff; --note: #b9baf2; --strip: #6d6cf0; }
.audio { --head: #4d4898; --clip: #4a4791; --body: #252d5b; --text: #dcdaff; --note: #d3cfff; --strip: #8080ee; }
.brass { --head: #3d56a3; --clip: #3d57a0; --body: #203463; --text: #d6e6ff; --note: #cfe1ff; --strip: #6f9bf0; }
.plain { --head: #434b51; --clip: #434c51; --body: #222e35; --text: #e2e8eb; --note: #cbd5da; --strip: #a9b6bc; }
.plain .track-name { color: #70797f; }
.piano { --head: #42a598; --clip: #42a195; --body: #1f5c5c; --text: #d8fff8; --note: #a4e9e2; --strip: #63eedd; }
```

FILE: script.js
```
const BARS = 32.1;
const TOP = 15; // height of a clip's name bar
const BODY = 78;

// Notes are [start bar, length in bars, y]
const shift = (notes, by) => notes.map(([s, l, y]) => [s + by, l, y]);

const row = (y, starts) => starts.map((s) => [s, 0.058, y]);
const kick = [0, 0.1875, 0.375, 0.5, 0.6875, 0.8125];
const thirds = [0.0625, 0.3125, 0.5625, 0.9375];
const offs = [0.125, 0.4375, 0.625];

const arp = [...row(17, [0.25, 0.75]), ...row(20, [0.875]), ...row(35, offs), ...row(46, thirds), ...row(90, kick)];
const arp2a = [...row(26, [0.25, 0.75]), ...row(32, [0.875]), ...row(44, offs), ...row(54, thirds), ...row(91, kick)];
const arp2b = [...row(17, [0.25, 0.75]), ...row(23, [0.875]), ...row(32, offs), ...row(44, thirds), ...row(81, kick)];
const arp3 = [
  ...row(17, [0.25, 0.75]), ...row(23, [0.875]), ...row(40, [0.125, 0.3125, 0.4375]),
  ...row(47, [0.0625, 0.625]), ...row(50, [0.5625, 0.9375]), ...row(87, [0, 0.1875, 0.375]), ...row(90, [0.5, 0.6875, 0.8125]),
];

const hold = [[0, 2, 78]];
const strings3 = [[0, 2, 78], [2, 1, 48], [3, 0.5, 60], [3.5, 0.5, 66], [4, 1.5, 78], [5.5, 0.5, 60], [6, 1, 30], [7, 1, 48]];
const cello2 = [[0, 2, 78], [2, 1, 48], [3, 1, 30]];

const brass1 = [
  [0, 1.9, 41], [1.87, 0.13, 35], [2, 1, 32], [3, 0.5, 47], [3.5, 0.5, 56],
  [0, 1.9, 77], [1.87, 0.18, 71], [2, 1.05, 68], [3, 0.52, 82], [3.5, 0.52, 91],
  [4, 1.9, 41], [5.88, 0.12, 32], [6, 1, 17], [7, 0.25, 32], [7.25, 0.25, 35], [7.5, 0.5, 47],
  [4, 1.9, 77], [5.88, 0.17, 68], [6, 1.05, 53], [7, 0.3, 68], [7.25, 0.3, 71], [7.5, 0.5, 82],
];
const brass2 = [
  [0, 1.75, 21], [1.75, 0.25, 27], [2, 1, 34], [3, 0.5, 51], [3.5, 0.5, 37], [4, 0.87, 44], [4.87, 0.13, 51],
  [5, 0.88, 21], [5.88, 0.12, 34], [5, 0.93, 61], [6, 1, 17], [6, 1.05, 58], [5.88, 0.17, 74],
  [7, 0.25, 34], [7.25, 0.25, 37], [7.5, 0.5, 51], [0, 0.93, 85], [1, 0.78, 85], [0.88, 0.17, 91],
  [1.75, 0.25, 78], [2, 1.05, 74], [3, 0.52, 91], [3.5, 0.52, 78], [4, 0.93, 85], [4.87, 0.18, 91],
  [7, 0.3, 74], [7.25, 0.3, 78], [7.5, 0.5, 91],
];
const pattern44 = [
  [0, 2, 27], [2, 1, 24], [3, 0.5, 27], [3.5, 0.5, 17], [4, 1.5, 27], [5.5, 0.5, 40], [6, 2, 34],
  [0, 2, 91], [2, 1, 74], [3, 0.5, 81], [3.5, 0.5, 84], [4, 1.5, 91], [5.5, 0.5, 81], [6, 1, 64], [7, 1, 74],
];

const riff = [
  [0, 0.5, 28], [0.5, 0.5, 17], [1, 0.5, 18], [1.5, 0.5, 23],
  [0, 0.5, 44], [0.5, 0.5, 33], [1, 0.5, 34], [1.5, 0.5, 40],
];
const piano1 = [
  ...riff, ...shift(riff, 2), ...shift(riff, 4), ...shift(riff, 6),
  [0, 2, 76], [2, 2, 72], [4, 2, 76], [6, 1, 66], [7, 1, 67], [6, 1, 82],
];
const piano2 = [[0, 2, 17], [0, 2, 32], [0, 6, 77], [6, 1, 71], [7, 1, 67], [7, 1, 82]];
const phrase = [
  [0, 0.5, 21], [0.5, 0.5, 22], [0, 0.5, 33], [0.5, 0.5, 34],
  [1, 0.5, 26], [1, 0.5, 39], [1.5, 1.5, 29], [1.5, 1.5, 42],
];
const bass = [[0, 2, 80], [2, 1, 75], [3, 0.5, 77], [3.5, 0.5, 78], [4, 1.5, 80], [5.5, 0.5, 77], [6, 1, 72], [7, 1, 75]];
const piano3 = [
  [0, 1, 29], [0, 1, 42], ...[1, 4, 7, 10, 13].flatMap((b) => shift(phrase, b)),
  [15.5, 0.5, 17], [16, 0.1, 29], ...bass, ...shift(bass, 8),
];

// Envelopes are [bar, y, tension towards this point]
const cutoff = [[0, 86], [8, 15.5, 3], [12, 56], [16, 15.5], [20, 47], [24, 15.5], [28, 41, -4.9], [32, 15.5], [32.1, 15.5]];
const celloEnv = [
  [0, 72], [3, 72], [4, 54], [4, 72], [5.75, 67], [6, 61], [7, 60], [8, 26], [8, 57], [10, 49], [12, 55],
  [14, 36], [14, 48], [15, 43], [15, 66], [16, 28, 0.9], [16, 45], [18, 45], [21.5, 41], [22, 32], [22, 64],
  [24, 15, 2.25], [24, 43], [26, 45], [27, 45], [28, 28, 2], [28, 47], [29.5, 45, 0.8], [31, 59, 1.5], [32, 20, 2],
];

const repeat = (n, clip) => Array.from({ length: n }, () => clip);
const A = ["Arp 2", 1, arp];
const A3 = ["Arp..#3", 1, arp3];
const A2a = ["Arp..#2", 1, arp2a];
const A2b = ["Arp..#2", 1, arp2b];

const tracks = [
  { cls: "arp", name: "Arp 2", icon: "steps", size: 4,
    clips: [...repeat(14, A), ["Arp 2 #2", 2, [...arp2a, ...shift(arp2b, 1)]], A, A, A, A3, A, A, A2b, A2a, A, A, A, A3, A, A, A2b, A2a] },
  { cls: "love", name: "Love Philter -\nCutoff frequency", icon: "auto",
    clips: [["Love Philter (Insert 12) - Filter 1 - Cutoff frequency envelope", BARS, cutoff, "auto"]] },
  { cls: "cello", name: "Cello", icon: "violin", size: 6,
    clips: [["Cello", 4, [[0, 2, 78], [2, 2, 60]]], ["Cello #2", 4, cello2], ["Cello", 2, hold], ["Cello", 2, hold],
      ["Cello #2", 4, cello2], ["Cello #3", 8, strings3], ["Cello #3", 8, strings3]] },
  { cls: "cello", name: "Viola", icon: "violin", size: 6,
    clips: [["Viola", 8, [[0, 2, 78], [2, 2, 60], [4, 2, 78], [6, 1, 30], [7, 1, 36]]], ["Viola", 2, hold], ["Viola", 2, hold],
      ["Viola", 2, hold], ["Viola #2", 2, [[0, 1, 48], [1, 1, 30]]], ["Viola #3", 8, strings3], ["Viola #3", 8, strings3]] },
  { cls: "cello-auto nested", name: "Cello Automation", icon: "mod", clips: [["Cello Automation envelope", 32, celloEnv, "auto"]] },
  { cls: "audio", name: "Underworld", icon: "drum", clips: [["Underworld", BARS, null, "audio"]] },
  { cls: "brass", name: "Brass", icon: "horn", size: 3,
    clips: [["Brass", 8, brass1], ["Brass #2", 8, brass2], ["Brass", 8, brass1], ["Brass #2", 8, brass2]] },
  { cls: "plain", name: "Track 12", size: 3, clips: repeat(4, ["Pattern 44", 8, pattern44]) },
  { cls: "piano", name: "Piano", icon: "keys", size: 1.5,
    clips: [["Piano", 8, piano1], ["Piano #2", 8, piano2], ["Piano #3", 16.1, piano3]] },
];

function drawNotes(notes, size) {
  return notes
    .map(([s, l, y]) => `<rect x="${s * 100}" y="${y - size / 2}" width="${l * 100}" height="${size}"/>`)
    .join("");
}

function drawEnvelope(points, bars) {
  let line = `M0 ${points[0][1]}`;
  for (let i = 1; i < points.length; i++) {
    const [x0, y0] = points[i - 1];
    const [x1, y1, k] = points[i];
    const steps = k ? 40 : 1;
    for (let n = 1; n <= steps; n++) {
      const t = n / steps;
      const f = k ? (Math.exp(k * t) - 1) / (Math.exp(k) - 1) : t;
      line += `L${((x0 + (x1 - x0) * t) * 100).toFixed(1)} ${(y0 + (y1 - y0) * f).toFixed(2)}`;
    }
  }
  return `<path class="env-fill" d="${line}V100H0Z"/><path class="env-line" d="${line}"/>`;
}

// Loudness curves for the audio clip, [bar, half height]
const intro = [[0, 14], [0.06, 22], [0.1, 27], [0.15, 22], [0.22, 17], [0.3, 12], [0.45, 6], [0.7, 3], [1, 1.8], [3, 1.6], [6, 1.6],
  [6.15, 3], [6.3, 4], [6.5, 3], [6.9, 3.5], [7, 7], [7.15, 7], [7.3, 5], [7.5, 8], [7.65, 13], [7.85, 16], [8, 18]];
const groove = [[0, 21], [0.08, 20], [0.15, 10], [0.25, 9], [0.4, 13], [0.5, 12], [0.6, 6], [0.74, 2], [0.75, 22], [0.85, 21],
  [0.98, 6], [1, 22], [1.1, 17], [1.2, 8], [1.35, 3], [1.36, 12], [1.5, 13], [1.62, 12], [1.74, 5], [1.76, 23], [1.87, 22], [1.99, 7]];
const crash = [[0, 24], [0.04, 36], [0.1, 38], [0.16, 24], [0.3, 20], [0.45, 15], [0.6, 9], [0.74, 3]];
const hit = [[0, 18], [0.03, 28], [0.1, 29], [0.16, 19], [0.3, 14], [0.45, 13], [0.6, 6], [0.74, 3]];

function level(curve, x) {
  let i = 1;
  while (i < curve.length - 1 && curve[i][0] < x) i++;
  const [x0, y0] = curve[i - 1];
  const [x1, y1] = curve[i];
  return y0 + (y1 - y0) * Math.min(1, (x - x0) / (x1 - x0));
}

function noise(n) {
  const v = Math.sin(n * 127.1) * 43758.5453;
  return v - Math.floor(v);
}

function drawWave() {
  let up = "M0 54";
  let down = "";
  for (let i = 0; i < BARS * 50; i++) {
    const x = i / 50;
    let amp;
    if (x < 8) amp = level(intro, x);
    else if (x < 8.74) amp = level(crash, x - 8);
    else if (x % 8 < 0.74 && x < 32) amp = level(hit, x % 8);
    else if (x >= 32) amp = 5;
    else amp = level(groove, x % 2);
    up += `L${x * 100} ${(54 - amp * (0.6 + 0.4 * noise(i))).toFixed(1)}`;
    down = `L${x * 100} ${(54 + amp * (0.6 + 0.4 * noise(i + 999))).toFixed(1)}` + down;
  }
  return `<path d="${up}${down}Z"/>`;
}

function clipHtml([name, bars, data, kind], size) {
  let art;
  if (kind === "audio") art = drawWave();
  else if (kind === "auto") art = drawEnvelope(data, bars);
  else art = drawNotes(data, size);
  return `<div class="clip" style="flex-grow:${bars}">
    <div class="clip-name ${name.includes("..") ? "short" : ""}"><svg><use href="#i-${kind || "clip"}"/></svg>${name}</div>
    <svg class="clip-body" viewBox="0 ${TOP} ${bars * 100} ${BODY}" preserveAspectRatio="none">${art}</svg>
  </div>`;
}

function trackHtml(track) {
  const total = track.clips.reduce((sum, clip) => sum + clip[1], 0);
  const rest = BARS - total > 0.01 ? `<div class="lane-end" style="flex-grow:${(BARS - total).toFixed(2)}"></div>` : "";
  const big = track.icon ? `<svg class="track-icon"><use href="#i-${track.icon}"/></svg>` : "";
  const small = track.icon ? `<svg><use href="#i-${track.icon}"/></svg>` : "";
  return `<section class="track ${track.cls}">
    <div class="track-head">
      <div class="track-name">${track.name}</div>
      ${big}
      <div class="track-foot"><span class="dots">...</span>${small}<i class="led"></i></div>
    </div>
    <i class="strip"></i>
    <div class="lane">${track.clips.map((c) => clipHtml(c, track.size)).join("")}${rest}</div>
  </section>`;
}

document.getElementById("tracks").insertAdjacentHTML("afterbegin", tracks.map(trackHtml).join(""));

let ruler = "";
for (let bar = 1; bar <= 33; bar++) {
  const grow = bar === 33 ? 0.1 : 1;
  const strong = bar % 4 === 1 && bar < 33;
  ruler += `<span class="${strong ? "strong" : ""}" style="flex-grow:${grow}">${bar}</span>`;
}
document.getElementById("ruler").insertAdjacentHTML("beforeend", ruler);

let scope = "M0 17";
for (let i = 1; i < 78; i++) {
  const amp = 5 + 11 * Math.abs(Math.sin(i / 24));
  scope += `L${i} ${(16 + (i % 2 ? -1 : 1) * amp * noise(i + 5)).toFixed(1)}`;
}
document.getElementById("scope").innerHTML = `<path d="${scope}" fill="none" stroke="#f2f5f6" stroke-width="1.2"/>`;
```
